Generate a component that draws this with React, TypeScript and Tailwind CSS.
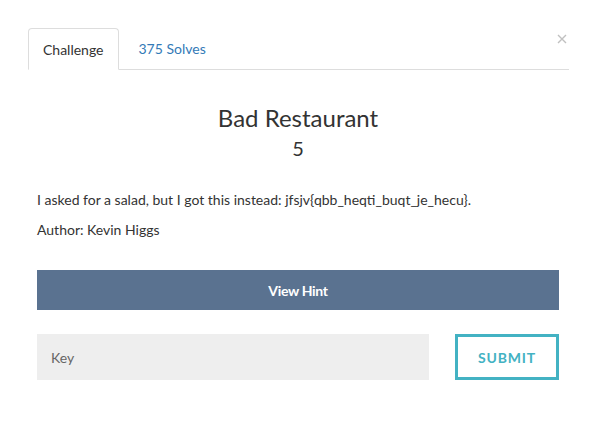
import React from "react";

export default function App() {
  return (
    <div className="relative h-[434px] w-[593px] bg-white font-['Lato','Open_Sans',sans-serif] text-[#333333]">
      <div className="relative ml-[28px] w-[541px] pt-[28px]">
        <div className="flex border-b border-[#dddddd]">
          <div className="-mb-px flex h-[42px] items-center rounded-t-[4px] border border-b-white border-[#dddddd] bg-white px-[14px] text-[14px]">
            Challenge
          </div>
          <div className="ml-[2px] flex h-[41px] items-center px-[18px] text-[14px] text-[#337ab7]">375 Solves</div>
        </div>
        <button type="button" className="absolute right-[2px] top-[34px] text-[#c0c0c0]">
          <svg width="10" height="10" viewBox="0 0 10 10" stroke="currentColor" strokeWidth="1.4">
            <path d="M1 1l8 8M9 1l-8 8" />
          </svg>
        </button>
      </div>

      <div className="pl-[37px] pr-[34px] pt-[33px]">
        <h3 className="text-center text-[24px] leading-[30px]">Bad Restaurant</h3>
        <h4 className="mt-[3px] text-center text-[20px] leading-[24px]">5</h4>

        <p className="mt-[30px] text-[14px] leading-[20px]">
          I asked for a salad, but I got this instead: jfsjv{"{"}qbb_heqti_buqt_je_hecu{"}"}.
        </p>
        <p className="mt-[10px] text-[14px] leading-[20px]">Author: Kevin Higgs</p>

        <button
          type="button"
          className="mt-[30px] flex h-[40px] w-full items-center justify-center bg-[#5a7290] text-[14px] font-bold tracking-[-0.3px] text-white"
        >
          View Hint
        </button>

        <div className="mt-[24px] flex items-center justify-between">
          <input
            placeholder="Key"
            className="h-[46px] w-[392px] bg-[#eeeeee] px-[14px] text-[14px] text-[#555] placeholder:text-[#666] outline-none"
          />
          <button
            type="button"
            className="flex h-[46px] w-[104px] items-center justify-center border-[3px] border-[#43b2c3] text-[14px] font-bold tracking-[0.8px] text-[#43b2c3]"
          >
            SUBMIT
          </button>
        </div>
      </div>
    </div>
  );
}
